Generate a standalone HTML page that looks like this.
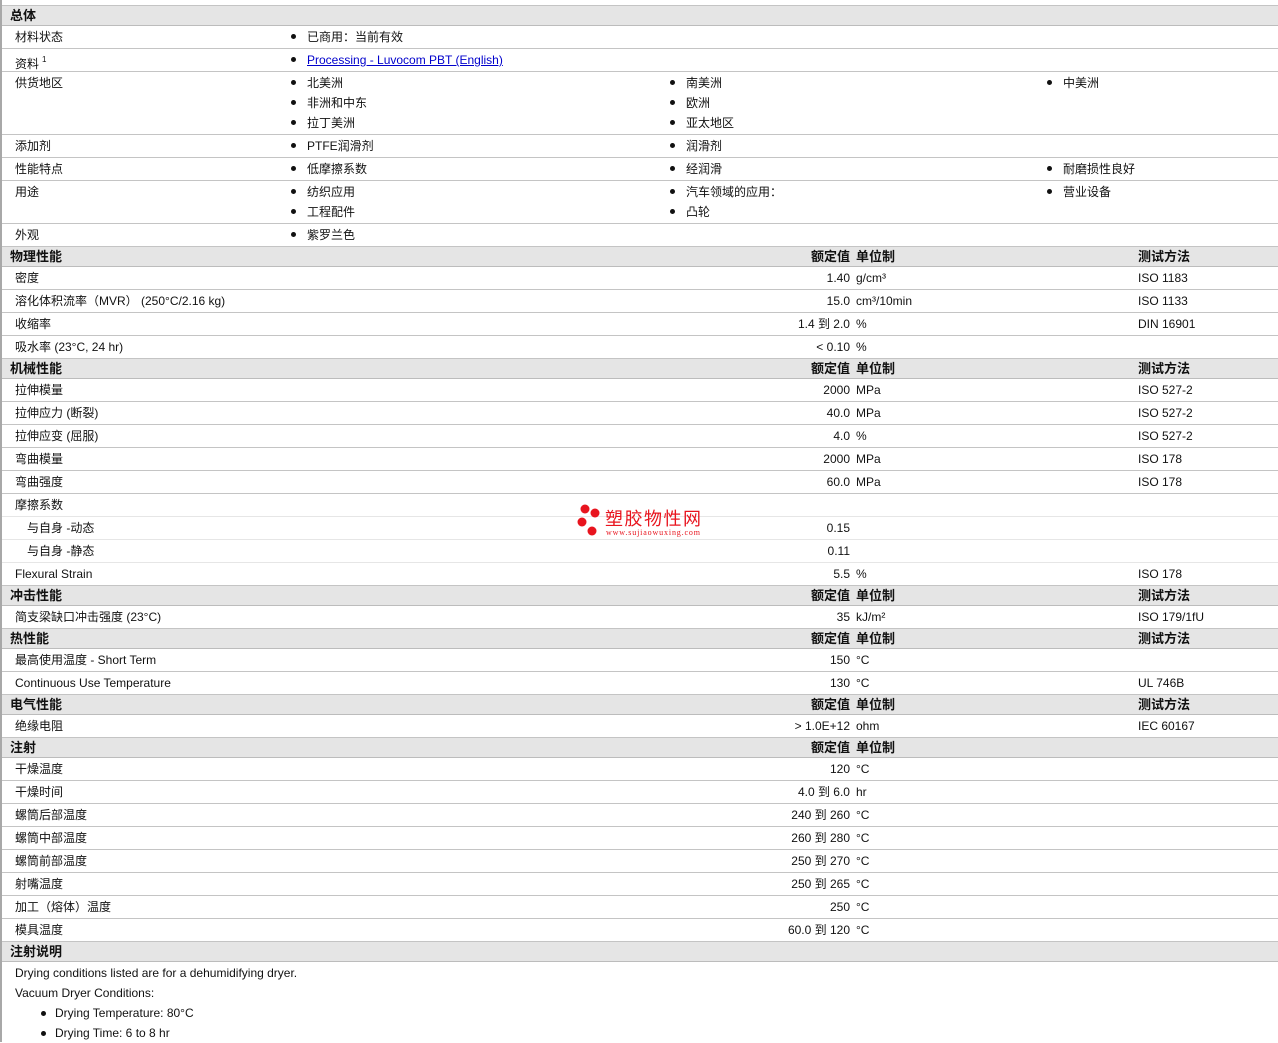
<!DOCTYPE html>
<html><head><meta charset="utf-8"><style>
*{margin:0;padding:0;box-sizing:border-box}
body{width:1278px;height:1042px;overflow:hidden;background:#fff;font-family:"Liberation Sans","Noto Sans CJK SC",sans-serif;font-size:12px;color:#111;position:relative}
#lb{position:absolute;left:0;top:0;width:2px;height:1042px;background:#a8a8a8}
#wrap{position:absolute;left:2px;top:5px;width:1276px;border-top:1px solid #c4c4c4}
.h{height:20px;background:#e5e5e5;border-bottom:1px solid #bcbcbc;position:relative;font-weight:bold;font-size:13px}
.h span{position:absolute;top:0;line-height:19px}
.r{height:23px;border-bottom:1px solid #c4c4c4;position:relative}
.r.s{border-bottom-color:#e6e6e6}
.r span{position:absolute;top:1px;line-height:20px;white-space:nowrap}
.l{left:13px}.l2{left:25px}
.v{right:428px;text-align:right}
.u{left:854px}.t{left:1136px}
.c1{left:289px}.c2{left:668px}.c3{left:1045px}
.c1::before,.c2::before,.c3::before{content:"";display:inline-block;width:5px;height:5px;border-radius:50%;background:#111;margin-right:11px;vertical-align:middle;position:relative;top:-1px}
a{color:#00c;text-decoration:underline}
sup{font-size:8px;vertical-align:6px;margin-left:3px}
.note{position:relative;padding:1px 0 0 13px;line-height:20px}
.note .li{padding-left:40px;position:relative}
.note .li::before{content:"";position:absolute;left:26px;top:8px;width:5px;height:5px;border-radius:50%;background:#111}
#wm{position:absolute;left:576px;top:503px;width:130px;height:36px}
</style></head><body>
<div id="lb"></div>
<div id="wrap">
<div class="h"><span style="left:8px">总体</span></div>
<div class="r"><span class="l">材料状态</span><span class="c1">已商用：当前有效</span></div>
<div class="r"><span class="l">资料<sup>1</sup></span><span class="c1"><a>Processing - Luvocom PBT (English)</a></span></div>
<div class="r" style="height:63px"><span class="l">供货地区</span><span class="c1">北美洲</span><span class="c1" style="top:21px">非洲和中东</span><span class="c1" style="top:41px">拉丁美洲</span><span class="c2">南美洲</span><span class="c2" style="top:21px">欧洲</span><span class="c2" style="top:41px">亚太地区</span><span class="c3">中美洲</span></div>
<div class="r"><span class="l">添加剂</span><span class="c1">PTFE润滑剂</span><span class="c2">润滑剂</span></div>
<div class="r"><span class="l">性能特点</span><span class="c1">低摩擦系数</span><span class="c2">经润滑</span><span class="c3">耐磨损性良好</span></div>
<div class="r" style="height:43px"><span class="l">用途</span><span class="c1">纺织应用</span><span class="c1" style="top:21px">工程配件</span><span class="c2">汽车领域的应用：</span><span class="c2" style="top:21px">凸轮</span><span class="c3">营业设备</span></div>
<div class="r"><span class="l">外观</span><span class="c1">紫罗兰色</span></div>
<div class="h"><span style="left:8px">物理性能</span><span style="right:428px">额定值</span><span style="left:854px">单位制</span><span style="left:1136px">测试方法</span></div>
<div class="r"><span class="l">密度</span><span class="v">1.40</span><span class="u">g/cm³</span><span class="t">ISO 1183</span></div>
<div class="r"><span class="l">溶化体积流率（MVR） (250°C/2.16 kg)</span><span class="v">15.0</span><span class="u">cm³/10min</span><span class="t">ISO 1133</span></div>
<div class="r"><span class="l">收缩率</span><span class="v">1.4 到 2.0</span><span class="u">%</span><span class="t">DIN 16901</span></div>
<div class="r"><span class="l">吸水率 (23°C, 24 hr)</span><span class="v">&lt; 0.10</span><span class="u">%</span></div>
<div class="h"><span style="left:8px">机械性能</span><span style="right:428px">额定值</span><span style="left:854px">单位制</span><span style="left:1136px">测试方法</span></div>
<div class="r"><span class="l">拉伸模量</span><span class="v">2000</span><span class="u">MPa</span><span class="t">ISO 527-2</span></div>
<div class="r"><span class="l">拉伸应力 (断裂)</span><span class="v">40.0</span><span class="u">MPa</span><span class="t">ISO 527-2</span></div>
<div class="r"><span class="l">拉伸应变 (屈服)</span><span class="v">4.0</span><span class="u">%</span><span class="t">ISO 527-2</span></div>
<div class="r"><span class="l">弯曲模量</span><span class="v">2000</span><span class="u">MPa</span><span class="t">ISO 178</span></div>
<div class="r"><span class="l">弯曲强度</span><span class="v">60.0</span><span class="u">MPa</span><span class="t">ISO 178</span></div>
<div class="r s"><span class="l">摩擦系数</span></div>
<div class="r s"><span class="l2">与自身 -动态</span><span class="v">0.15</span></div>
<div class="r s"><span class="l2">与自身 -静态</span><span class="v">0.11</span></div>
<div class="r"><span class="l">Flexural Strain</span><span class="v">5.5</span><span class="u">%</span><span class="t">ISO 178</span></div>
<div class="h"><span style="left:8px">冲击性能</span><span style="right:428px">额定值</span><span style="left:854px">单位制</span><span style="left:1136px">测试方法</span></div>
<div class="r"><span class="l">简支梁缺口冲击强度 (23°C)</span><span class="v">35</span><span class="u">kJ/m²</span><span class="t">ISO 179/1fU</span></div>
<div class="h"><span style="left:8px">热性能</span><span style="right:428px">额定值</span><span style="left:854px">单位制</span><span style="left:1136px">测试方法</span></div>
<div class="r"><span class="l">最高使用温度 - Short Term</span><span class="v">150</span><span class="u">°C</span></div>
<div class="r"><span class="l">Continuous Use Temperature</span><span class="v">130</span><span class="u">°C</span><span class="t">UL 746B</span></div>
<div class="h"><span style="left:8px">电气性能</span><span style="right:428px">额定值</span><span style="left:854px">单位制</span><span style="left:1136px">测试方法</span></div>
<div class="r"><span class="l">绝缘电阻</span><span class="v">&gt; 1.0E+12</span><span class="u">ohm</span><span class="t">IEC 60167</span></div>
<div class="h"><span style="left:8px">注射</span><span style="right:428px">额定值</span><span style="left:854px">单位制</span></div>
<div class="r"><span class="l">干燥温度</span><span class="v">120</span><span class="u">°C</span></div>
<div class="r"><span class="l">干燥时间</span><span class="v">4.0 到 6.0</span><span class="u">hr</span></div>
<div class="r"><span class="l">螺筒后部温度</span><span class="v">240 到 260</span><span class="u">°C</span></div>
<div class="r"><span class="l">螺筒中部温度</span><span class="v">260 到 280</span><span class="u">°C</span></div>
<div class="r"><span class="l">螺筒前部温度</span><span class="v">250 到 270</span><span class="u">°C</span></div>
<div class="r"><span class="l">射嘴温度</span><span class="v">250 到 265</span><span class="u">°C</span></div>
<div class="r"><span class="l">加工（熔体）温度</span><span class="v">250</span><span class="u">°C</span></div>
<div class="r"><span class="l">模具温度</span><span class="v">60.0 到 120</span><span class="u">°C</span></div>
<div class="h"><span style="left:8px">注射说明</span></div>
<div class="note">
<div>Drying conditions listed are for a dehumidifying dryer.</div>
<div>Vacuum Dryer Conditions:</div>
<div class="li">Drying Temperature: 80°C</div>
<div class="li">Drying Time: 6 to 8 hr</div>
</div>
</div>
<svg id="wm" viewBox="0 0 130 36" xmlns="http://www.w3.org/2000/svg">
<circle cx="9" cy="6" r="4.5" fill="#e8141e"/><circle cx="19" cy="10" r="4.5" fill="#e8141e"/><circle cx="6" cy="19" r="4.5" fill="#e8141e"/><circle cx="16" cy="28" r="4.5" fill="#e8141e"/>
<text x="29" y="22" font-family="Noto Sans CJK SC,sans-serif" font-size="18" textLength="96" fill="#e8141e">塑胶物性网</text>
<text x="30" y="32" font-family="Liberation Serif,serif" font-size="8" textLength="94" fill="#e8141e">www.sujiaowuxing.com</text>
</svg>
</body></html>
